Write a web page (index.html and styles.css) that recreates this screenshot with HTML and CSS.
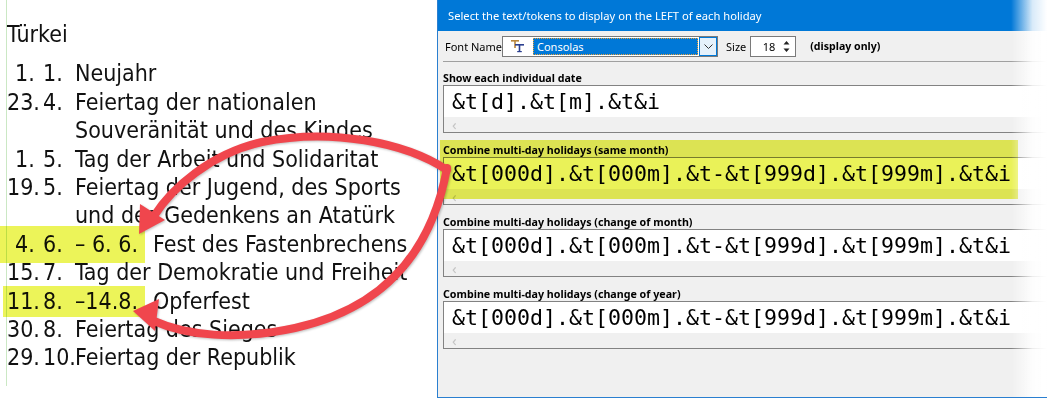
FILE: index.html
```html
<!DOCTYPE html>
<html>
	<head>
		<meta charset="UTF-8">
		<title>Feiertage Türkei</title>
		<link rel="stylesheet" href="styles.css">
	</head>
	<body>
		<div class="page">
			<!-- Vorschau links -->
			<div class="sheet">
				<div class="doc">
					<div class="country">Türkei</div>
					<div class="day"><span class="d one">1.</span><span class="m">1.</span><span class="name">Neujahr</span></div>
					<div class="day"><span class="d">23.</span><span class="m">4.</span><span class="name">Feiertag der nationalen<br>Souveränität und des Kindes</span></div>
					<div class="day"><span class="d one">1.</span><span class="m">5.</span><span class="name">Tag der Arbeit und Solidaritat</span></div>
					<div class="day"><span class="d">19.</span><span class="m">5.</span><span class="name">Feiertag der Jugend, des Sports<br>und des Gedenkens an Atatürk</span></div>
					<div class="day hl hl-a"><span class="d one">4.</span><span class="m">6.</span><span class="name"><span class="range">–&nbsp;6.&nbsp;6.</span>Fest des Fastenbrechens</span></div>
					<div class="day"><span class="d">15.</span><span class="m">7.</span><span class="name">Tag der Demokratie und Freiheit</span></div>
					<div class="day hl hl-b"><span class="d">11.</span><span class="m">8.</span><span class="name"><span class="range">–14.8.</span>Opferfest</span></div>
					<div class="day"><span class="d">30.</span><span class="m">8.</span><span class="name">Feiertag des Sieges</span></div>
					<div class="day"><span class="d">29.</span><span class="m">10.</span><span class="name">Feiertag der Republik</span></div>
				</div>
			</div>

			<!-- Dialog rechts -->
			<div class="dialog">
				<div class="titlebar">Select the text/tokens to display on the LEFT of each holiday</div>
				<div class="toolbar">
					<span class="lbl">Font Name</span>
					<div class="combo">
						<svg class="tt" width="14" height="14" viewBox="0 0 14 14">
							<rect x="0" y="1" width="8" height="1.6" fill="#b8863b"/>
							<rect x="3.2" y="1" width="1.6" height="8" fill="#b8863b"/>
							<rect x="4" y="5" width="9" height="1.6" fill="#2b3f8f"/>
							<rect x="7.7" y="5" width="1.6" height="8" fill="#2b3f8f"/>
							<rect x="6.2" y="12" width="4.6" height="1.2" fill="#2b3f8f"/>
						</svg>
						<span class="sel">Consolas</span>
						<span class="drop">
							<svg width="9" height="5" viewBox="0 0 9 5"><path d="M0.5 0.5 L4.5 4.5 L8.5 0.5" fill="none" stroke="#333" stroke-width="1"/></svg>
						</span>
					</div>
					<span class="lbl size">Size</span>
					<div class="spin">
						<span class="num">18</span>
						<span class="arrows-ud">
							<svg width="7" height="13" viewBox="0 0 7 13"><path d="M3.5 1 L6.5 4.5 L0.5 4.5 Z M3.5 12 L6.5 8.5 L0.5 8.5 Z" fill="#222"/></svg>
						</span>
					</div>
					<span class="hint">(display only)</span>
				</div>

				<div class="group">
					<div class="glabel">Show each individual date</div>
					<div class="box">
						<div class="field">&amp;t[d].&amp;t[m].&amp;t&amp;i</div>
						<div class="hscroll">&lsaquo;</div>
					</div>
				</div>
				<div class="group marked">
					<div class="glabel">Combine multi-day holidays (same month)</div>
					<div class="box">
						<div class="field">&amp;t[000d].&amp;t[000m].&amp;t-&amp;t[999d].&amp;t[999m].&amp;t&amp;i</div>
						<div class="hscroll">&lsaquo;</div>
					</div>
				</div>
				<div class="group">
					<div class="glabel">Combine multi-day holidays (change of month)</div>
					<div class="box">
						<div class="field">&amp;t[000d].&amp;t[000m].&amp;t-&amp;t[999d].&amp;t[999m].&amp;t&amp;i</div>
						<div class="hscroll">&lsaquo;</div>
					</div>
				</div>
				<div class="group">
					<div class="glabel">Combine multi-day holidays (change of year)</div>
					<div class="box">
						<div class="field">&amp;t[000d].&amp;t[000m].&amp;t-&amp;t[999d].&amp;t[999m].&amp;t&amp;i</div>
						<div class="hscroll">&lsaquo;</div>
					</div>
				</div>
				<div class="fade"></div>
			</div>

			<!-- rote Pfeile -->
			<svg class="arrows" width="1047" height="400" viewBox="0 0 1047 400">
				<g fill="none" stroke="#f0464d" stroke-width="8" stroke-linecap="round">
					<path d="M447 170 C 405 142 330 128 262 142 C 210 154 172 188 154 216"/>
					<path d="M447 168 C 432 250 385 308 295 328 C 235 341 185 335 154 321"/>
				</g>
				<g fill="#f0464d">
					<polygon points="139,234 140,204 165,220"/>
					<polygon points="133,311 159,299 155,331"/>
				</g>
			</svg>
		</div>
	</body>
</html>
```

FILE: styles.css
```css
*{
	margin: 0;
	padding: 0;
	box-sizing: border-box;
}
body{
	width: 1047px;
	height: 400px;
	overflow: hidden;
	background: #fff;
}
.page{
	position: relative;
	display: flex;
	height: 400px;
}

/* linke Seite */
.sheet{
	width: 437px;
	background: #fff;
	padding-left: 6px;
}
.doc{
	height: 386px;
	border-left: 1px solid #cbe8c4;
	padding-top: 20px;
	font-family: "DejaVu Sans Condensed", "DejaVu Sans", sans-serif;
	font-stretch: condensed;
	font-size: 23px;
	line-height: 28.4px;
	color: #111;
}
.country{
	margin-bottom: 11px;
}
.day{
	position: relative;
	display: grid;
	grid-template-columns: 36px 32px 1fr;
}
.day .d.one{
	padding-left: 8px;
}
.day .range{
	display: inline-block;
	width: 78px;
}
.hl::before{
	content: "";
	position: absolute;
	background: #e9f33c;
	mix-blend-mode: multiply;
	opacity: 0.85;
}
.hl-a::before{
	left: -7px;
	top: -4px;
	width: 145px;
	height: 37px;
}
.hl-b::before{
	left: -4px;
	top: -1px;
	width: 142px;
	height: 31px;
}

/* Dialog */
.dialog{
	position: relative;
	flex: 1;
	height: 398px;
	background: #f0f0f0;
	border-left: 1px solid #2a7fd0;
	border-bottom: 1px solid #2a7fd0;
	padding-left: 5px;
	font-family: "Noto Sans", "Open Sans", sans-serif;
	font-size: 11px;
	color: #000;
	overflow: hidden;
}
.titlebar{
	height: 31px;
	margin-left: -5px;
	padding-left: 10px;
	line-height: 31px;
	font-size: 11.2px;
	background: #0078d7;
	color: #fff;
}
.toolbar{
	display: flex;
	align-items: center;
	height: 31px;
	padding-left: 2px;
	border-bottom: 1px solid #a0a0a0;
}
.combo{
	display: flex;
	align-items: center;
	width: 216px;
	height: 21px;
	border: 1px solid #7a7a7a;
	background: #fff;
	padding: 1px;
}
.tt{
	margin: 0 8px 0 7px;
}
.sel{
	flex: 1;
	height: 17px;
	line-height: 15px;
	padding-left: 3px;
	background: #0078d7;
	color: #fff;
	border: 1px dotted #e6a23c;
}
.drop{
	display: flex;
	align-items: center;
	justify-content: center;
	width: 18px;
	height: 19px;
	margin-left: 1px;
	margin-right: -1px;
	background: #e5f1fb;
	border: 1px solid #0078d7;
}
.lbl.size{
	margin-left: 8px;
}
.spin{
	display: flex;
	align-items: center;
	width: 46px;
	height: 21px;
	margin-left: 4px;
	border: 1px solid #7a7a7a;
	background: #fff;
}
.spin .num{
	flex: 1;
	text-align: right;
	padding-right: 8px;
}
.spin .arrows-ud{
	display: flex;
	width: 12px;
}
.hint{
	margin-left: 14px;
	font-size: 10.6px;
	font-weight: bold;
}

.group{
	position: relative;
	margin-top: 10px;
	width: 620px;
}
.toolbar + .group{
	margin-top: 9px;
}
.glabel{
	font-size: 10.7px;
	font-weight: bold;
	line-height: 14px;
}
.box{
	height: 48px;
	border: 1px solid #828282;
	background: #f0f0f0;
}
.field{
	height: 31px;
	padding-left: 8px;
	line-height: 31px;
	background: #fff;
	font-family: "DejaVu Sans Mono", "Liberation Mono", monospace;
	font-size: 21.6px;
	white-space: nowrap;
}
.hscroll{
	height: 15px;
	line-height: 14px;
	padding-left: 8px;
	font-size: 15px;
	color: #c4c4c4;
}
.marked::after{
	content: "";
	position: absolute;
	left: -3px;
	top: -3px;
	width: 578px;
	height: 59px;
	background: #e6f03a;
	mix-blend-mode: multiply;
	opacity: 0.85;
}
.fade{
	position: absolute;
	top: 0;
	right: 0;
	width: 36px;
	height: 100%;
	background: linear-gradient(to right, rgba(255,255,255,0), rgba(255,255,255,0.85) 60%, #fff);
}

.arrows{
	position: absolute;
	left: 0;
	top: 0;
	pointer-events: none;
	filter: drop-shadow(1px 1px 1px rgba(0,0,0,0.25));
}
```
